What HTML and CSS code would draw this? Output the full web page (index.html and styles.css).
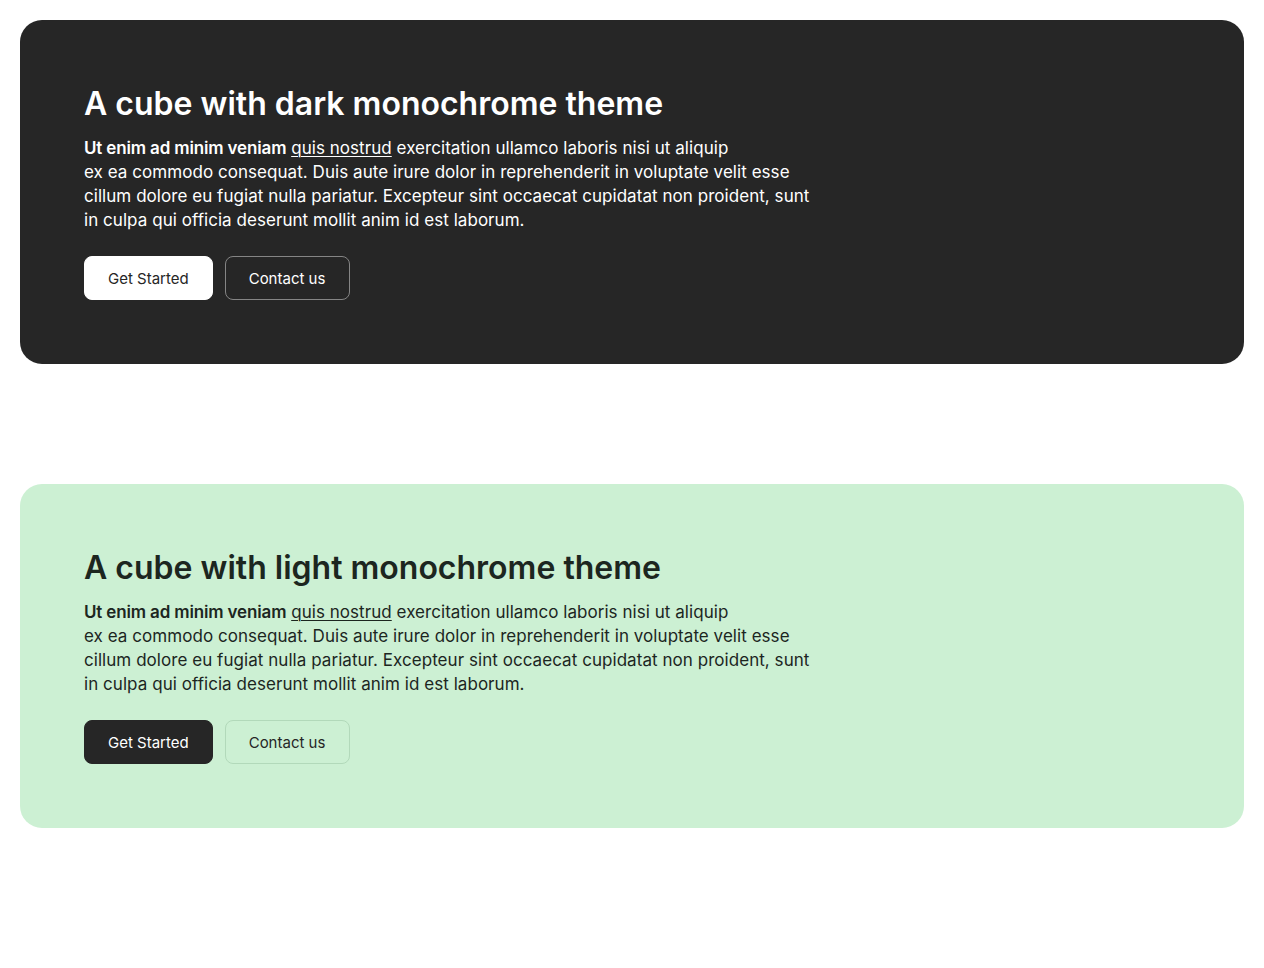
FILE: index.html
```html
<!DOCTYPE html>
<html lang="en">
<head>
<meta charset="utf-8">
<title>Cubes</title>
<link rel="stylesheet" href="styles.css">
</head>
<body>
<main class="page">
  <section class="cube cube-dark">
    <h1 class="cube-title">A cube with dark monochrome theme</h1>
    <p class="cube-text"><strong>Ut enim ad minim veniam</strong> <a href="#">quis nostrud</a> exercitation ullamco laboris nisi ut aliquip<br>ex ea commodo consequat. Duis aute irure dolor in reprehenderit in voluptate velit esse<br>cillum dolore eu fugiat nulla pariatur. Excepteur sint occaecat cupidatat non proident, sunt<br>in culpa qui officia deserunt mollit anim id est laborum.</p>
    <div class="actions">
      <button class="btn btn-primary">Get Started</button>
      <button class="btn btn-secondary">Contact us</button>
    </div>
  </section>
  <section class="cube cube-light">
    <h1 class="cube-title">A cube with light monochrome theme</h1>
    <p class="cube-text"><strong>Ut enim ad minim veniam</strong> <a href="#">quis nostrud</a> exercitation ullamco laboris nisi ut aliquip<br>ex ea commodo consequat. Duis aute irure dolor in reprehenderit in voluptate velit esse<br>cillum dolore eu fugiat nulla pariatur. Excepteur sint occaecat cupidatat non proident, sunt<br>in culpa qui officia deserunt mollit anim id est laborum.</p>
    <div class="actions">
      <button class="btn btn-primary">Get Started</button>
      <button class="btn btn-secondary">Contact us</button>
    </div>
  </section>
</main>
</body>
</html>
```
FILE: styles.css
```css
* { box-sizing: border-box; }
html, body { margin: 0; padding: 0; background: #fff; }
body { font-family: Inter, "Noto Sans", sans-serif; }
.page {
  padding: 20px;
  display: flex;
  flex-direction: column;
  gap: 120px;
}
.cube {
  border-radius: 22px;
  padding: 64px;
  min-height: 344px;
}
.cube-title {
  margin: 0;
  font-size: 32px;
  line-height: 40px;
  font-weight: 600;
}
.cube-text {
  margin: 12px 0 0;
  font-size: 17px;
  line-height: 24px;
  letter-spacing: 0.05px;
  white-space: nowrap;
}
.cube-text strong { font-weight: 600; letter-spacing: -0.15px; }
.cube-text a { color: inherit; text-decoration: underline; text-underline-offset: 2px; text-decoration-thickness: 1px; }
.actions {
  margin-top: 24px;
  display: flex;
  gap: 12px;
}
.btn {
  font-family: inherit;
  font-size: 15px;
  height: 44px;
  padding: 0 23px;
  border-radius: 8px;
  border: 1px solid transparent;
  cursor: pointer;
}
.cube-dark { background: #262626; color: #fff; }
.cube-dark .btn-primary { background: #fff; color: #262626; border-color: #fff; }
.cube-dark .btn-secondary { background: transparent; color: #fff; border-color: #858585; padding: 0 24px 0 23px; }
.cube-light { background: #ccf0d3; color: #1c261f; }
.cube-light .btn-primary { background: #262626; color: #fff; border-color: #262626; }
.cube-light .btn-secondary { background: transparent; color: #262626; border-color: #b2d9ba; padding: 0 24px 0 23px; }
```
